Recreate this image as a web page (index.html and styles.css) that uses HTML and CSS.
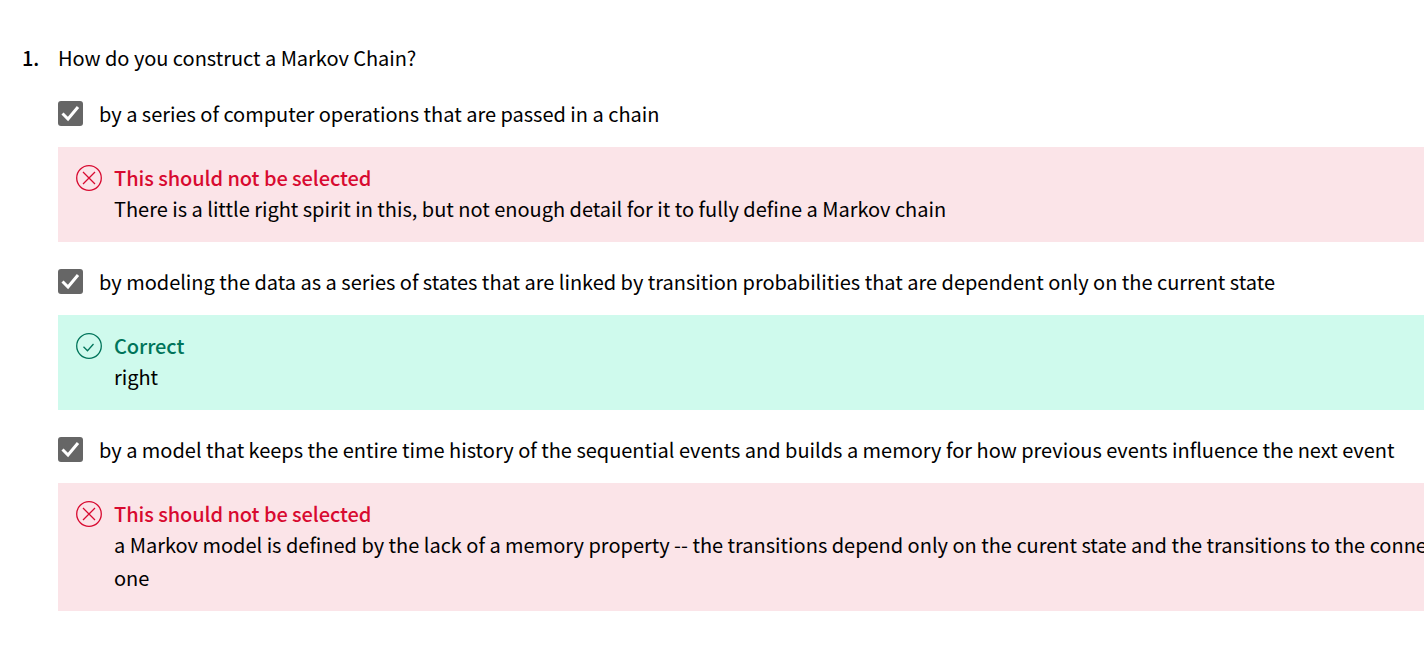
FILE: index.html
```html
<!DOCTYPE html>
<html lang="en">

<head>
  <meta charset="UTF-8">
  <meta name="viewport" content="width=device-width, initial-scale=1.0">
  <title>Quiz feedback</title>
  <link rel="stylesheet" href="styles.css">
</head>

<body>
  <div class="question">
    <div class="question-head">
      <span class="number">1.</span>
      <span>How do you construct a Markov Chain?</span>
    </div>

    <div class="option">
      <span class="checkbox">
        <svg viewBox="0 0 25 25" width="25" height="25"><path d="M4.500 12.500L10 18L20 6" /></svg>
      </span>
      <span>by a series of computer operations that are passed in a chain</span>
    </div>
    <div class="feedback wrong">
      <svg class="status" viewBox="0 0 26 26" width="26" height="26">
        <circle cx="13" cy="13" r="12.300" />
        <path d="M7 7l12 12M19 7L7 19" />
      </svg>
      <div>
        <div class="feedback-title">This should not be selected</div>
        <div class="feedback-text">There is a little right spirit in this, but not enough detail for it to fully define a Markov chain</div>
      </div>
    </div>

    <div class="option">
      <span class="checkbox">
        <svg viewBox="0 0 25 25" width="25" height="25"><path d="M4.500 12.500L10 18L20 6" /></svg>
      </span>
      <span>by modeling the data as a series of states that are linked by transition probabilities that are dependent only on the current state</span>
    </div>
    <div class="feedback right">
      <svg class="status" viewBox="0 0 26 26" width="26" height="26">
        <circle cx="13" cy="13" r="12.300" />
        <path d="M7.500 13.700l4 4L17.500 11" />
      </svg>
      <div>
        <div class="feedback-title">Correct</div>
        <div class="feedback-text">right</div>
      </div>
    </div>

    <div class="option">
      <span class="checkbox">
        <svg viewBox="0 0 25 25" width="25" height="25"><path d="M4.500 12.500L10 18L20 6" /></svg>
      </span>
      <span>by a model that keeps the entire time history of the sequential events and builds a memory for how previous events influence the next event</span>
    </div>
    <div class="feedback wrong">
      <svg class="status" viewBox="0 0 26 26" width="26" height="26">
        <circle cx="13" cy="13" r="12.300" />
        <path d="M7 7l12 12M19 7L7 19" />
      </svg>
      <div>
        <div class="feedback-title">This should not be selected</div>
        <div class="feedback-text">a Markov model is defined by the lack of a memory property -- the transitions depend only on the curent state and the transitions to the connected states depend on the current one</div>
      </div>
    </div>
  </div>
</body>

</html>
```

FILE: styles.css
```css
html,
body {
  overflow: hidden;
}

body {
  margin: 0;
  background: #fff;
  color: #000;
  font-family: "Noto Sans CJK JP", "Noto Sans", sans-serif;
  font-size: 20px;
  line-height: 33px;
}

.question {
  width: 1800px;
  box-sizing: border-box;
  padding: 41px 0 0 22px;
}

.question-head {
  display: flex;
  letter-spacing: -0.03px;
}

.number {
  width: 36px;
  font-weight: 500;
}

.option {
  display: flex;
  align-items: center;
  gap: 16px;
  height: 25px;
  margin: 27px 0 0 36px;
  letter-spacing: -0.015px;
}

.feedback + .option {
  margin-top: 27px;
}

.checkbox {
  width: 25px;
  height: 25px;
  border-radius: 3px;
  background: #666;
  flex-shrink: 0;
}

.checkbox svg {
  display: block;
  fill: none;
  stroke: #fff;
  stroke-width: 3;
}

.feedback {
  display: flex;
  gap: 12px;
  width: 1725px;
  margin: 21px 0 0 36px;
  padding: 16px 18px 16.600px;
  box-sizing: border-box;
}

.feedback-title {
  font-weight: 500;
  line-height: 29px;
  letter-spacing: -0.07px;
}

.feedback-text {
  line-height: 33.400px;
  letter-spacing: -0.015px;
}

.status {
  flex-shrink: 0;
  margin-top: 2px;
  fill: none;
  stroke-width: 1.300;
}

.wrong {
  background: #fbe4e8;
}

.wrong .feedback-title {
  color: #d80a30;
}

.wrong .status {
  stroke: #d80a30;
}

.right {
  background: #cffaed;
}

.right .feedback-title {
  color: #00745a;
}

.right .status {
  stroke: #00745a;
}
```
